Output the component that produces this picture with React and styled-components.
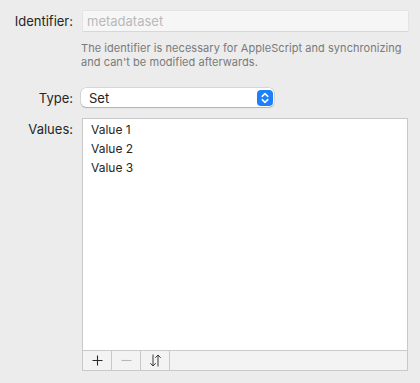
import React, { useState } from "react";
import styled, { createGlobalStyle } from "styled-components";

const GlobalStyles = createGlobalStyle`
  html, body {
    margin: 0;
    padding: 0;
    background: #ececec;
  }
  body {
    font-family: Inter, "Noto Sans", "Liberation Sans", sans-serif;
    color: #262626;
    -webkit-font-smoothing: antialiased;
  }
`;

const values = ["Value 1", "Value 2", "Value 3"];

const App = () => {
  const [selected, setSelected] = useState(null);

  return (
    <>
      <GlobalStyles />
      <Form>
        <Label>Identifier:</Label>
        <Field>
          <TextInput type="text" placeholder="metadataset" disabled />
        </Field>

        <Help>
          The identifier is necessary for AppleScript and synchronizing
          <br />
          and can't be modified afterwards.
        </Help>

        <Label top={1}>Type:</Label>
        <Field>
          <Popup>
            <PopupText>Set</PopupText>
            <Stepper>
              <svg width="8" height="12" viewBox="0 0 8 12">
                <path
                  d="M1.2 4.4 L4 1.6 L6.8 4.4 M1.2 7.6 L4 10.4 L6.8 7.6"
                  fill="none"
                  stroke="#fff"
                  strokeWidth="1.5"
                  strokeLinecap="round"
                  strokeLinejoin="round"
                />
              </svg>
            </Stepper>
          </Popup>
        </Field>

        <Label top={11}>Values:</Label>
        <ListBox>
          <Rows>
            {values.map((v, i) => (
              <Item
                key={v}
                active={selected === i}
                onClick={() => setSelected(i)}
              >
                {v}
              </Item>
            ))}
          </Rows>
          <BottomBar>
            <BarButton>
              <svg width="11" height="11" viewBox="0 0 11 11">
                <path d="M5.5 0.5 V10.5 M0.5 5.5 H10.5" stroke="#2a2a2a" strokeWidth="1.1" />
              </svg>
            </BarButton>
            <BarButton disabled>
              <svg width="11" height="11" viewBox="0 0 11 11">
                <path d="M0.5 5.5 H10.5" stroke="#b8b8b8" strokeWidth="1.1" />
              </svg>
            </BarButton>
            <BarButton>
              <svg width="13" height="13" viewBox="0 0 13 13">
                <path
                  d="M4 0.5 V12 M1.3 9.2 L4 12 L6.7 9.2 M9 12.5 V1 M6.3 3.8 L9 1 L11.7 3.8"
                  fill="none"
                  stroke="#3a3a3a"
                  strokeWidth="1"
                />
              </svg>
            </BarButton>
          </BottomBar>
        </ListBox>
      </Form>
    </>
  );
};

const Form = styled.div`
  display: grid;
  grid-template-columns: 73px 1fr;
  grid-template-rows: auto auto auto 1fr;
  column-gap: 8px;
  padding: 11px 12px 12px 0;
  height: 383px;
  box-sizing: border-box;
`;

const Label = styled.div`
  grid-column: 1;
  text-align: right;
  font-size: 13px;
  line-height: 20px;
  padding-top: ${(p) => p.top || 0}px;
  color: #262626;
`;

const Field = styled.div`
  grid-column: 2;
  display: flex;
`;

const TextInput = styled.input`
  flex: 1;
  margin-left: 2px;
  height: 20px;
  box-sizing: border-box;
  border: none;
  background: #f6f6f6;
  box-shadow: 0 0 0 0.5px #dcdcdc, 0 1px 0 0 #d3d3d3;
  padding: 0 0 0 4px;
  font-family: inherit;
  font-size: 13px;
  outline: none;

  &::placeholder {
    color: #b9b9b9;
  }
`;

const Help = styled.div`
  grid-column: 2;
  margin: 10px 0 18px 0;
  font-size: 11px;
  line-height: 14px;
  color: #7a7a7a;
  letter-spacing: 0.05px;
`;

const Popup = styled.div`
  width: 193px;
  height: 19px;
  margin-top: 1px;
  box-sizing: border-box;
  display: flex;
  align-items: center;
  justify-content: space-between;
  background: #fff;
  border-radius: 5px;
  box-shadow: 0 0 0 0.5px rgba(0, 0, 0, 0.18), 0 1px 1px rgba(0, 0, 0, 0.18);
  padding: 0 1px 0 8px;
`;

const PopupText = styled.span`
  font-size: 13px;
  color: #222;
`;

const Stepper = styled.span`
  width: 16px;
  height: 16px;
  border-radius: 4px;
  background: #1b80fa;
  display: flex;
  align-items: center;
  justify-content: center;
`;

const ListBox = styled.div`
  grid-column: 2;
  margin-top: 10px;
  margin-left: 1px;
  display: flex;
  flex-direction: column;
  background: #fff;
  border: 1px solid #c9c9c9;
  min-height: 0;
`;

const Rows = styled.div`
  flex: 1;
  padding-top: 1px;
`;

const Item = styled.div`
  height: 19px;
  line-height: 19px;
  padding-left: 8px;
  font-size: 12px;
  color: #262626;
  cursor: default;
  background: ${(p) => (p.active ? "#dcdcdc" : "transparent")};
`;

const BottomBar = styled.div`
  height: 19px;
  display: flex;
  background: #f3f3f3;
  border-top: 1px solid #c9c9c9;
`;

const BarButton = styled.button`
  width: 29px;
  height: 19px;
  padding: 0;
  border: none;
  border-right: 1px solid #c9c9c9;
  background: transparent;
  display: flex;
  align-items: center;
  justify-content: center;
`;

export default App;
